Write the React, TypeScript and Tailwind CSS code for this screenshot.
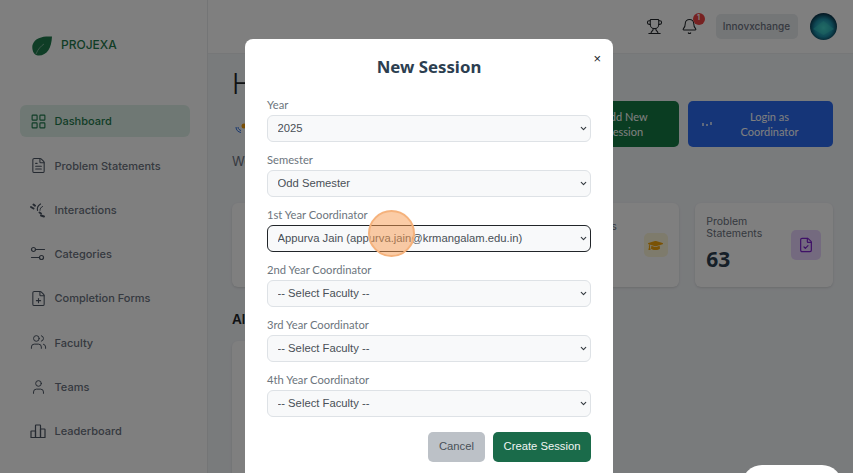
import * as React from "react";
import { LayoutGrid, FileText, FilePlus, Users, User, Trophy, Bell, FileCheck, ChevronDown } from "lucide-react";
import { FaGraduationCap } from "react-icons/fa";

const InteractionsIcon = () => (
  <svg width="16" height="16" viewBox="0 0 16 16" fill="none" stroke="currentColor" strokeWidth="1.2" strokeLinecap="round">
    <path d="M1 5l2.500 1.500M3.500 2.500l1.500 1.200" strokeWidth="2" />
    <path d="M10.500 2C8 3.500 7 6 7.500 8.500" />
    <path d="M12.500 4.500C10.800 5.200 10 6.800 10 8.300" strokeWidth="1" />
    <path d="M9.500 10.500l1.500 1M11 13.500l3 1" strokeWidth="2" />
  </svg>
);

const CategoriesIcon = () => (
  <svg width="16" height="16" viewBox="0 0 16 16" fill="none" stroke="currentColor" strokeWidth="1.2" strokeLinecap="round">
    <circle cx="3.500" cy="3.500" r="2" />
    <path d="M5.500 3.500H14.500" />
    <circle cx="11.500" cy="11.500" r="2" />
    <path d="M1.500 11.500H9.500" />
  </svg>
);

const LeaderboardIcon = () => (
  <svg width="16" height="16" viewBox="0 0 16 16" fill="none" stroke="currentColor" strokeWidth="1.2" strokeLinejoin="round">
    <path d="M1 14.500V8.500a.5.5 0 0 1 .5-.5H5.500V14.500H1z" />
    <path d="M5.500 14.500V2.500a.5.5 0 0 1 .5-.5H10a.5.5 0 0 1 .5.5V14.500H5.500z" />
    <path d="M10.500 14.500V6H14.500a.5.5 0 0 1 .5.5V14.500H10.500z" />
  </svg>
);

const LeafLogo = () => (
  <svg width="20" height="20" viewBox="0 0 20 20">
    <path d="M20 0.500C12 0 3 1 0.500 9C-0.500 14 2 19.500 6 19.500C15 20 19.500 12 20 0.500z" fill="#1f7a4d" />
    <path d="M4 18C6 13 9 10 12 8" stroke="#ffffff" strokeOpacity="0.5" strokeWidth="0.8" fill="none" />
  </svg>
);

const navItems = [
  { label: "Dashboard", icon: <LayoutGrid size={17} strokeWidth={1.6} />, active: true },
  { label: "Problem Statements", icon: <FileText size={17} strokeWidth={1.5} /> },
  { label: "Interactions", icon: <InteractionsIcon /> },
  { label: "Categories", icon: <CategoriesIcon /> },
  { label: "Completion Forms", icon: <FilePlus size={17} strokeWidth={1.5} /> },
  { label: "Faculty", icon: <Users size={18} strokeWidth={1.4} /> },
  { label: "Teams", icon: <User size={18} strokeWidth={1.4} /> },
  { label: "Leaderboard", icon: <LeaderboardIcon /> },
];

const Field = ({ label, value, options, focused }: { label: string; value: string; options: string[]; focused?: boolean }) => (
  <div className="flex flex-col">
    <label className="h-[21px] text-[11.200px] leading-[21px] text-[#6c757d] font-['Lato',sans-serif]">{label}</label>
    <div className="relative">
      <select
        defaultValue={value}
        className={`block h-[26.500px] w-full appearance-none rounded-[6px] pl-[9.500px] pr-4 text-[11.250px] text-[#495057] bg-[#f8f9fa] font-['Liberation_Sans',sans-serif] outline-none ${
          focused ? "border-[1.5px] border-[#212529]" : "border border-[#dee2e6]"
        }`}
      >
        {options.map((o) => (
          <option key={o}>{o}</option>
        ))}
      </select>
      <ChevronDown size={9} strokeWidth={3} className="pointer-events-none absolute right-[3px] top-[9px] text-[#343a40]" />
    </div>
  </div>
);

export default function App() {
  const faculty = ["-- Select Faculty --", "Appurva Jain (appurva.jain@krmangalam.edu.in)"];
  return (
    <div className="relative flex h-[473px] w-[853px] overflow-hidden bg-[#f3f6f9] font-['Inter',sans-serif]">
      {/* Sidebar */}
      <aside className="flex w-[208px] shrink-0 flex-col border-r border-[#e8eaed] bg-white pl-[20px] pr-[17px]">
        <div className="flex h-[105px] items-start gap-[9px] pl-[12px] pt-[36px]">
          <LeafLogo />
          <span className="text-[12px] font-medium leading-[18px] text-[#1f7a4d]">PROJEXA</span>
        </div>
        <nav className="flex flex-col gap-[12.250px]">
          {navItems.map((item) => (
            <div
              key={item.label}
              className={`flex h-[32px] items-center gap-[8px] rounded-[6px] pl-[9.500px] ${
                item.active ? "bg-[#dff1e8] text-[#1f7a4d]" : "text-[#6b7280]"
              }`}
            >
              <span className={`flex w-[17px] justify-center ${item.active ? "" : "text-[#4b5563]"}`}>{item.icon}</span>
              <span className="pt-[1px] text-[11px] font-medium">{item.label}</span>
            </div>
          ))}
        </nav>
      </aside>

      {/* Main */}
      <div className="flex min-w-0 flex-1 flex-col">
        <header className="flex h-[54px] shrink-0 items-center justify-end border-b border-[#eceef1] bg-white pr-[16px]">
          <Trophy size={17} strokeWidth={1.5} className="text-[#212529]" />
          <div className="relative ml-[18px]">
            <Bell size={17} strokeWidth={1.5} className="text-[#212529]" />
            <span className="absolute -right-[6.500px] -top-[5.500px] flex h-[12px] w-[12px] items-center justify-center rounded-full bg-[#ef4444] text-[7px] font-bold text-white">
              1
            </span>
          </div>
          <span className="ml-[17.500px] flex h-[25px] w-[82px] items-center justify-center rounded-[5px] bg-[#e9ecef] text-[10px] font-medium text-[#6b7280]">
            Innovxchange
          </span>
          <svg width="27" height="27" viewBox="0 0 27 27" className="ml-[12.500px]">
            <defs>
              <radialGradient id="av" cx="50%" cy="55%" r="55%">
                <stop offset="0%" stopColor="#4fe0d8" />
                <stop offset="60%" stopColor="#1c8fa8" />
                <stop offset="100%" stopColor="#06293f" />
              </radialGradient>
            </defs>
            <circle cx="13.500" cy="13.500" r="13.500" fill="url(#av)" />
            <path d="M3 16L13.500 8L24 16L13.500 22z" fill="#38c9c0" fillOpacity="0.5" />
          </svg>
        </header>

        <main className="flex flex-col pl-[24px] pr-[20px]">
          <div className="flex h-[97px] items-start justify-between pt-[14px]">
            <div>
              <h1 className="text-[28px] font-light leading-[32px] text-[#212529]">Hello</h1>
              <div className="mt-[20px] flex h-[16px] items-center pl-[3px]">
                <svg width="12" height="12" viewBox="0 0 12 12" fill="none">
                  <path d="M1 5C1 8 3 10 6 10.500M3 5C3 7 4.500 8 6 8.500" stroke="#2f6fdf" strokeWidth="1" />
                  <circle cx="9" cy="4" r="2.500" fill="#f59e0b" />
                </svg>
              </div>
            </div>
            <div className="mt-[33px] flex gap-[9px] text-[11px] leading-[15px] text-white font-['Lato',sans-serif]">
              <button className="flex h-[46px] w-[126px] items-center rounded-[5px] bg-[#147a45] pl-[14px]">
                <span className="flex-1 pl-[10px] text-center">
                  Add New
                  <br />
                  Session
                </span>
                <span className="w-[6px]" />
              </button>
              <button className="flex h-[46px] w-[145px] items-center rounded-[5px] bg-[#2a6af0] pl-[14px] pr-[13px]">
                <span className="flex gap-[2px]">
                  <i className="mt-[1px] h-[3px] w-[2px] bg-white/70" />
                  <i className="mt-[2px] h-[2px] w-[2px] bg-white/70" />
                  <i className="h-[3px] w-[2px] bg-white/70" />
                </span>
                <span className="flex-1 pl-[7px] text-center">
                  Login as
                  <br />
                  Coordinator
                </span>
              </button>
            </div>
          </div>

          <p className="text-[13px] leading-[20px] text-[#6b7280]">Welcome back</p>

          <div className="mt-[32px] grid h-[84px] grid-cols-4 gap-[16px]">
            <div className="rounded-[6px] bg-white shadow-sm" />
            <div className="rounded-[6px] bg-white shadow-sm" />
            <div className="flex items-center justify-between rounded-[6px] bg-white pl-[12px] pr-[11px] shadow-sm">
              <span className="mb-[36px] text-[10.500px] text-[#6b7280]">Coordinators</span>
              <span className="flex h-[24px] w-[24px] items-center justify-center rounded-[5px] bg-[#fdf6d8] text-[#f5a50b]">
                <FaGraduationCap size={15} />
              </span>
            </div>
            <div className="flex items-center justify-between rounded-[6px] bg-white pl-[11.500px] pr-[12px] shadow-sm">
              <div className="-mt-[2px]">
                <p className="text-[10.500px] leading-[12px] text-[#6b7280]">
                  Problem
                  <br />
                  Statements
                </p>
                <p className="mt-[5px] font-['Noto_Sans',sans-serif] text-[21px] font-bold leading-[28px] text-[#2c3e50]">63</p>
              </div>
              <span className="flex h-[30px] w-[30px] items-center justify-center rounded-[5px] bg-[#e9d5ff] text-[#7e22ce]">
                <FileCheck size={16} strokeWidth={1.8} />
              </span>
            </div>
          </div>

          <h2 className="mt-[23px] text-[13.500px] font-semibold leading-[18px] text-[#212529]">All Sessions</h2>
          <div className="mt-[13px] h-[200px] w-[340px] rounded-[6px] bg-white shadow-sm" />
        </main>
      </div>

      {/* Modal overlay */}
      <div className="absolute inset-0 bg-black/50 pl-[245px] pt-[39px]">
        <div className="relative w-[368px] rounded-[8px] bg-white px-[22px] pb-[20px] pt-[16px]">
          <button className="absolute right-[12px] top-[12px] text-[13px] leading-[16px] text-[#212529] font-['Liberation_Sans',sans-serif]">×</button>
          <h3 className="text-center font-['Noto_Sans',sans-serif] text-[16.800px] font-bold leading-[24px] text-[#2c3e50]">New Session</h3>
          <div className="mt-[15px] flex flex-col gap-[7.500px]">
            <Field label="Year" value="2025" options={["2025", "2024"]} />
            <Field label="Semester" value="Odd Semester" options={["Odd Semester", "Even Semester"]} />
            <Field label="1st Year Coordinator" value={faculty[1]} options={faculty} focused />
            <Field label="2nd Year Coordinator" value={faculty[0]} options={faculty} />
            <Field label="3rd Year Coordinator" value={faculty[0]} options={faculty} />
            <Field label="4th Year Coordinator" value={faculty[0]} options={faculty} />
          </div>
          <div className="mt-[15px] flex justify-end gap-[8px] font-['Liberation_Sans',sans-serif] text-[11.250px]">
            <button className="h-[30px] w-[57px] rounded-[5px] bg-[#bcc1c7] text-[#495057]">Cancel</button>
            <button className="h-[30px] w-[98px] rounded-[5px] bg-[#1a6b4a] text-[#f1f5f3]">Create Session</button>
          </div>
        </div>
      </div>

      {/* Click highlight */}
      <div className="absolute left-[368px] top-[210px] h-[47px] w-[47px] rounded-full border-2 border-[#f5b27c] bg-[#f79a4e]/50" />

      {/* Chat widget */}
      <div className="absolute left-[742px] top-[465px] h-[40px] w-[100px] rounded-full bg-white" />
    </div>
  );
}
